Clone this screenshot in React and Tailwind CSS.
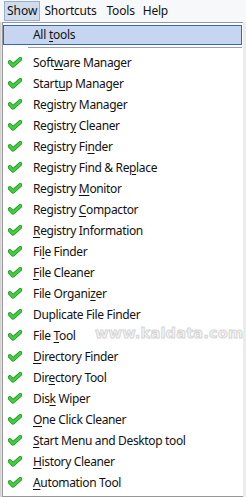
import React from "react";

const items = [
  ["Soft", "w", "are Manager"],
  ["Start", "u", "p Manager"],
  ["Re", "g", "istry Manager"],
  ["Registr", "y", " Cleaner"],
  ["Registry Fi", "n", "der"],
  ["Registry Find & Re", "p", "lace"],
  ["Registry ", "M", "onitor"],
  ["Registry ", "C", "ompactor"],
  ["", "R", "egistry Information"],
  ["Fi", "l", "e Finder"],
  ["", "F", "ile Cleaner"],
  ["File Organi", "z", "er"],
  ["Duplicate File Finder", "", ""],
  ["File ", "T", "ool"],
  ["", "D", "irectory Finder"],
  ["Dir", "e", "ctory Tool"],
  ["Dis", "k", " Wiper"],
  ["", "O", "ne Click Cleaner"],
  ["", "S", "tart Menu and Desktop tool"],
  ["", "H", "istory Cleaner"],
  ["", "A", "utomation Tool"],
];

function Check() {
  return (
    <svg width="14" height="11" viewBox="0 0 14 11" className="shrink-0">
      <path d="M1.8 5.2 L5 8.6 L12.3 2" fill="none" stroke="#1c8a1c" strokeWidth="4" strokeLinecap="round" strokeLinejoin="round" />
      <path d="M1.8 5.2 L5 8.6 L12.3 2" fill="none" stroke="#3fd23f" strokeWidth="2.6" strokeLinecap="round" strokeLinejoin="round" />
    </svg>
  );
}

export default function App() {
  return (
    <div
      className="w-[246px] h-[497px] overflow-hidden bg-white relative text-[12px] text-[#111]"
      style={{ fontFamily: '"Noto Sans", "Open Sans", sans-serif' }}
    >
      <div className="h-[22px] bg-[#f7f8f9] flex items-start pl-[4px] pt-[1px] leading-[20px]">
        <div className="h-[20px] px-[2px] bg-[#cfdcee] border border-[#97aed3] flex items-center leading-none">Show</div>
        <div className="ml-[4px] h-[20px] flex items-center tracking-[-0.2px]">Shortcuts</div>
        <div className="ml-[10px] h-[20px] flex items-center tracking-[-0.2px]">Tools</div>
        <div className="ml-[8px] h-[20px] flex items-center tracking-[-0.2px]">Help</div>
      </div>
      <div className="h-[475px] flex">
        <div className="w-[2px] bg-gradient-to-r from-[#c8c8c8] to-[#eeeeee]" />
        <div className="flex-1 border-t border-l border-b border-[#979797] bg-white flex flex-col">
          <div className="mt-[2px] ml-[0px] mr-[1px] h-[20px] bg-[#c6d6f0] border border-[#3465c4] flex items-center pl-[29px] tracking-[-0.3px]">
            All <span className="ml-[3px] underline underline-offset-[2px]">t</span>ools
          </div>
          <div className="ml-[25px] mr-[1px] mt-[2px] h-px bg-[#a0a0a0]" />
          <div className="mt-[4px] flex flex-col relative">
            {items.map(([a, u, b], i) => (
              <div key={i} className="h-[21px] flex items-center">
                <div className="w-[30px] flex items-center pl-[5px]">
                  <Check />
                </div>
                <span className="whitespace-pre tracking-[-0.35px]">
                  {a}
                  {u && <span className="underline underline-offset-[2px]">{u}</span>}
                  {b}
                </span>
              </div>
            ))}
            <div
              className="absolute left-[92px] top-[274px] text-[14.5px] leading-none font-bold tracking-[0.2px] text-[#f6f6f6] whitespace-nowrap"
              style={{ fontFamily: '"DejaVu Sans", sans-serif', WebkitTextStroke: "1px #d6d6d6" }}
            >
              www.kaldata.com
            </div>
          </div>
        </div>
        <div className="w-[3px] bg-[#ececec]" />
      </div>
    </div>
  );
}
